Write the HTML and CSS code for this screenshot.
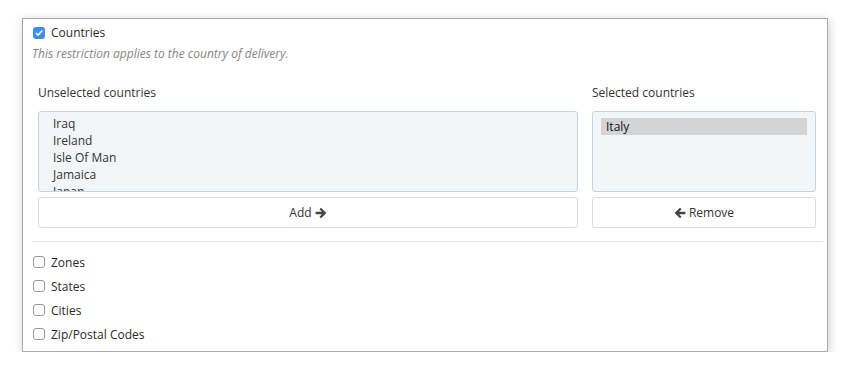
FILE: index.html
```html
<!DOCTYPE html>
<html lang="en">
<head>
    <meta charset="UTF-8">
    <title>Shipping Restrictions</title>
    <link rel="stylesheet" href="styles.css">
</head>
<body>

    <!-- Restriction Panel -->
    <div class="panel">
        <label class="check-row">
            <span class="check checked">
                <svg width="12" height="12" viewBox="0 0 12 12"><path d="M3.2 6.3 L5.1 8.2 L8.9 3.9" fill="none" stroke="#fff" stroke-width="1.5" stroke-linecap="round" stroke-linejoin="round"/></svg>
            </span>
            Countries
        </label>
        <p class="help">This restriction applies to the country of delivery.</p>

        <!-- Country picker -->
        <div class="picker">
            <div class="col col-left">
                <div class="col-title">Unselected countries</div>
                <div class="listbox">
                    <div class="list-inner scrolled">
                        <div class="option">Iraq</div>
                        <div class="option">Ireland</div>
                        <div class="option">Isle Of Man</div>
                        <div class="option">Jamaica</div>
                        <div class="option">Japan</div>
                        <div class="option">Jersey</div>
                    </div>
                </div>
                <button class="btn">Add
                    <svg class="arrow" width="12" height="12" viewBox="0 0 12 12"><path d="M6 0.8 L11.4 6 L6 11.2 L4.5 9.7 L6.9 7.3 L0.6 7.3 L0.6 4.7 L6.9 4.7 L4.5 2.3 Z" fill="#444"/></svg>
                </button>
            </div>
            <div class="col col-right">
                <div class="col-title">Selected countries</div>
                <div class="listbox">
                    <div class="list-inner">
                        <div class="option selected">Italy</div>
                    </div>
                </div>
                <button class="btn">
                    <svg class="arrow" width="12" height="12" viewBox="0 0 12 12"><path d="M6 0.8 L0.6 6 L6 11.2 L7.5 9.7 L5.1 7.3 L11.4 7.3 L11.4 4.7 L5.1 4.7 L7.5 2.3 Z" fill="#444"/></svg>
                    Remove</button>
            </div>
        </div>

        <hr class="divider">

        <!-- Other restrictions -->
        <label class="check-row tall"><span class="check"></span>Zones</label>
        <label class="check-row tall"><span class="check"></span>States</label>
        <label class="check-row tall"><span class="check"></span>Cities</label>
        <label class="check-row tall"><span class="check"></span>Zip/Postal Codes</label>
    </div>

</body>
</html>
```

FILE: styles.css
```css
/* Global Styles */
* {
    margin: 0;
    padding: 0;
    box-sizing: border-box;
}

body {
    background: #fff;
    font-family: 'Open Sans', 'Noto Sans', sans-serif;
    font-size: 12px;
    color: #333;
}

/* Panel */
.panel {
    width: 806px;
    margin: 18px 0 0 22px;
    padding: 3px 4px 5px 9px;
    border: 1px solid #a9a9a9;
    box-shadow: 1px 2px 9px rgba(0, 0, 0, 0.2);
    background: #fff;
}

/* Checkbox rows */
.check-row {
    display: flex;
    align-items: center;
    height: 20px;
    padding-left: 1px;
    font-size: 12px;
    color: #2a2a2a;
}

.check-row.tall {
    height: 24px;
}

.check {
    width: 12px;
    height: 12px;
    margin-right: 6px;
    border: 1px solid #9a9a9a;
    border-radius: 3px;
    background: #fff;
    display: flex;
}

.check.checked {
    border: none;
    background: #3d8fe8;
    margin-top: 2px;
}

.help {
    height: 20px;
    line-height: 20px;
    margin-top: 2px;
    font-size: 12px;
    font-style: italic;
    color: #858585;
}

/* Picker */
.picker {
    display: flex;
    gap: 14px;
    margin-top: 19px;
    padding: 0 7px 0 6px;
}

.col-left {
    flex: 1;
}

.col-right {
    width: 224px;
}

.col-title {
    height: 20px;
    line-height: 20px;
    margin-bottom: 8px;
}

.listbox {
    height: 81px;
    padding: 6px 8px;
    background: #f3f6f8;
    border: 1px solid #c6d3dd;
    border-radius: 3px;
    overflow: hidden;
}

.list-inner.scrolled {
    margin-top: -3px;
}

.option {
    height: 17px;
    line-height: 17px;
    padding: 0 6px;
    color: #333;
}

.option.selected {
    background: #d4d4d4;
    color: #111;
    padding-left: 5px;
}

/* Buttons */
.btn {
    display: flex;
    align-items: center;
    justify-content: center;
    gap: 3px;
    width: 100%;
    height: 31px;
    margin-top: 5px;
    background: #fff;
    border: 1px solid #dcdcdc;
    border-radius: 3px;
    font-family: inherit;
    font-size: 12px;
    color: #333;
    cursor: pointer;
}

.arrow {
    display: block;
}

/* Divider */
.divider {
    border: none;
    border-top: 1px solid #e8e8e8;
    margin: 13px 0 8px 0;
}
```
